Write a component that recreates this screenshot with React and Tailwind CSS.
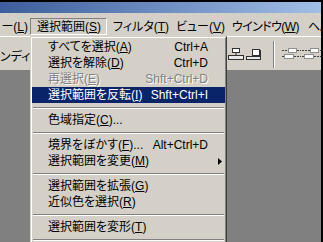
import React from 'react';

const items = [
  { label: 'すべてを選択', key: 'A', sc: 'Ctrl+A' },
  { label: '選択を解除', key: 'D', sc: 'Ctrl+D' },
  { label: '再選択', key: 'E', sc: 'Shft+Ctrl+D', disabled: true },
  { label: '選択範囲を反転', key: 'I', sc: 'Shft+Ctrl+I', active: true },
  'sep',
  { label: '色域指定', key: 'C', dots: true },
  'sep',
  { label: '境界をぼかす', key: 'F', dots: true, sc: 'Alt+Ctrl+D' },
  { label: '選択範囲を変更', key: 'M', sub: true },
  'sep',
  { label: '選択範囲を拡張', key: 'G' },
  { label: '近似色を選択', key: 'R' },
  'sep',
  { label: '選択範囲を変形', key: 'T' },
  'sep',
];

const menus = [
  { label: 'ー', key: 'L', w: 'w-[30px] justify-end pr-[2px]' },
  { label: '選択範囲', key: 'S', w: 'w-[77px] pl-[6px]', open: true },
  { label: 'フィルタ', key: 'T', w: 'w-[63px] pl-[6px]' },
  { label: 'ビュー', key: 'V', w: 'w-[56px] pl-[6px]' },
  { label: 'ウインドウ', key: 'W', w: 'w-[76px] pl-[6px] tracking-[-0.6px]' },
  { label: 'ヘ/', key: null, w: 'flex-1 pl-[6px]' },
];

function Mnemonic({ label, k, dots }) {
  return (
    <span className="whitespace-nowrap">
      {label}
      {k && (
        <>
          (<span className="underline underline-offset-1">{k}</span>)
        </>
      )}
      {dots && '...'}
    </span>
  );
}

function AlignIcons() {
  return (
    <div className="flex items-start pt-[9px]">
      {/* align top */}
      <svg width="17" height="16" viewBox="0 0 17 16">
        <rect x="4.5" y="2.5" width="7" height="4" fill="#fff" stroke="#303030" />
        <line x1="8" y1="7" x2="8" y2="9" stroke="#303030" />
        <rect x="0.5" y="9.5" width="15" height="4" fill="#e8e8e8" stroke="#303030" />
        <line x1="1" y1="13.5" x2="16" y2="13.5" stroke="#303030" />
      </svg>
      <svg width="17" height="16" viewBox="0 0 17 16" className="ml-[1px]">
        <rect x="6.5" y="3.5" width="7" height="6" fill="#fff" stroke="#303030" />
        <line x1="14.5" y1="4" x2="14.5" y2="11" stroke="#303030" />
        <rect x="0.5" y="10.5" width="14" height="3" fill="#e8e8e8" stroke="#303030" />
      </svg>
      <div className="ml-[10px] mt-[-5px] h-[27px] w-[2px] border-l border-l-[#808080] border-r border-r-white" />
      <svg width="19" height="16" viewBox="0 0 19 16" className="ml-[7px]">
        <line x1="0" y1="4.5" x2="19" y2="4.5" stroke="#404040" strokeDasharray="2 1" />
        <rect x="6.5" y="2.5" width="8" height="4" fill="#fff" stroke="#909090" />
        <line x1="0" y1="10.5" x2="19" y2="10.5" stroke="#404040" strokeDasharray="2 1" />
        <rect x="2.5" y="8.5" width="9" height="4" fill="#fff" stroke="#909090" />
      </svg>
      <svg width="19" height="16" viewBox="0 0 19 16" className="ml-[1px]">
        <line x1="0" y1="4.5" x2="19" y2="4.5" stroke="#404040" strokeDasharray="2 1" />
        <rect x="8.5" y="2.5" width="8" height="4" fill="#fff" stroke="#909090" />
        <line x1="0" y1="10.5" x2="19" y2="10.5" stroke="#404040" strokeDasharray="2 1" />
        <rect x="2.5" y="8.5" width="9" height="4" fill="#fff" stroke="#909090" />
      </svg>
    </div>
  );
}

export default function App() {
  return (
    <div className="relative w-[323px] h-[242px] overflow-hidden bg-black font-['Liberation_Sans','Noto_Sans_CJK_JP',sans-serif] text-[12px] text-black [font-feature-settings:'palt']">
      <div className="flex flex-col w-[321px] h-[240px] mt-[2px] bg-[#808080]">
        {/* title bar */}
        <div className="h-[11px] bg-gradient-to-r from-[#3d5d9c] to-[#a2bfe6]" />

        {/* menu bar */}
        <div className="h-[23px] bg-[#d4d0c8] flex items-start pt-[5px] overflow-hidden">
          {menus.map((m) => (
            <div
              key={m.label}
              className={`shrink-0 h-[17px] flex items-center leading-none whitespace-nowrap ${m.w} ${
                m.open ? 'border border-t-[#808080] border-l-[#808080] border-r-white border-b-white' : ''
              }`}
            >
              <Mnemonic label={m.label} k={m.key} />
            </div>
          ))}
        </div>

        {/* tool options bar */}
        <div className="h-[34px] bg-[#d4d0c8] flex border-t border-t-white">
          <div className="w-[228px] shrink-0 pt-[14px] leading-[12px] whitespace-nowrap">ンディ</div>
          <AlignIcons />
        </div>

        {/* workspace */}
        <div className="flex-1 bg-[#808080]" />
      </div>

      {/* dropdown */}
      <div className="absolute left-[30px] top-[36px] w-[197px] h-[220px] bg-[#d4d0c8] border-t border-l border-t-[#d4d0c8] border-l-[#d4d0c8] border-r border-r-[#404040]">
        <div className="h-full border-t border-l border-t-white border-l-white border-r border-r-[#808080] pt-[1px]">
          {items.map((it, i) =>
            it === 'sep' ? (
              <div key={i} className="h-[9px] flex flex-col justify-center px-[1px]">
                <div className="h-[1px] bg-[#808080]" />
                <div className="h-[1px] bg-white" />
              </div>
            ) : (
              <div
                key={i}
                className={`relative h-[16px] flex items-center justify-between pl-[16px] pr-[17px] whitespace-nowrap leading-none ${
                  it.active ? 'bg-[#0a246a] text-white' : ''
                } ${it.disabled ? 'text-[#808080] [text-shadow:1px_1px_0_#ffffff]' : ''}`}
              >
                <Mnemonic label={it.label} k={it.key} dots={it.dots} />
                {it.sc && <span className="[font-feature-settings:normal]">{it.sc}</span>}
                {it.sub && (
                  <svg width="4" height="7" viewBox="0 0 4 7" className="absolute right-[3px] top-[5px]">
                    <polygon points="0,0 4,3.5 0,7" fill="#000" />
                  </svg>
                )}
              </div>
            )
          )}
        </div>
      </div>
    </div>
  );
}
